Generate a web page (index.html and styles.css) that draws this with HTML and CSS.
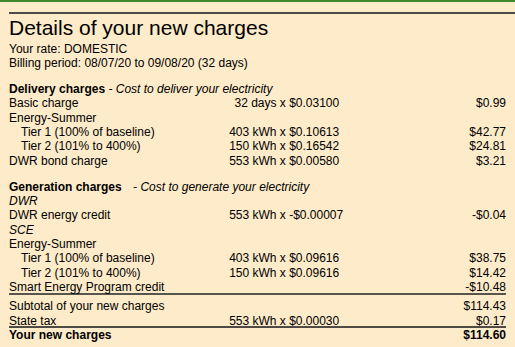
FILE: index.html
```html
<!DOCTYPE html>
<html lang="en">
<head>
<meta charset="utf-8">
<title>Details of your new charges</title>
<link rel="stylesheet" href="styles.css">
</head>
<body>
<div class="page">
  <div class="top-rule"></div>
  <h1 class="title">Details of your new charges</h1>
  <div class="info">
    <div class="line">Your rate: DOMESTIC</div>
    <div class="line">Billing period: 08/07/20 to 09/08/20 (32 days)</div>
  </div>

  <section class="section first">
    <div class="head"><b>Delivery charges</b> <i>- Cost to deliver your electricity</i></div>
    <div class="row"><span class="label">Basic charge</span><span class="qty">32 days</span><span class="rate">x $0.03100</span><span class="amt">$0.99</span></div>
    <div class="row"><span class="label">Energy-Summer</span></div>
    <div class="row"><span class="label indent">Tier 1 (100% of baseline)</span><span class="qty">403 kWh</span><span class="rate">x $0.10613</span><span class="amt">$42.77</span></div>
    <div class="row"><span class="label indent">Tier 2 (101% to 400%)</span><span class="qty">150 kWh</span><span class="rate">x $0.16542</span><span class="amt">$24.81</span></div>
    <div class="row"><span class="label">DWR bond charge</span><span class="qty">553 kWh</span><span class="rate">x $0.00580</span><span class="amt">$3.21</span></div>
  </section>

  <section class="section second">
    <div class="head"><b>Generation charges</b> <i class="wide">- Cost to generate your electricity</i></div>
    <div class="row"><span class="label"><i>DWR</i></span></div>
    <div class="row"><span class="label">DWR energy credit</span><span class="qty">553 kWh</span><span class="rate">x -$0.00007</span><span class="amt">-$0.04</span></div>
    <div class="row"><span class="label"><i>SCE</i></span></div>
    <div class="row"><span class="label">Energy-Summer</span></div>
    <div class="row"><span class="label indent">Tier 1 (100% of baseline)</span><span class="qty">403 kWh</span><span class="rate">x $0.09616</span><span class="amt">$38.75</span></div>
    <div class="row"><span class="label indent">Tier 2 (101% to 400%)</span><span class="qty">150 kWh</span><span class="rate">x $0.09616</span><span class="amt">$14.42</span></div>
    <div class="row before-rule"><span class="label">Smart Energy Program credit</span><span class="amt">-$10.48</span></div>
    <div class="row subtotal"><span class="label">Subtotal of your new charges</span><span class="amt">$114.43</span></div>
    <div class="row before-total"><span class="label">State tax</span><span class="qty">553 kWh</span><span class="rate">x $0.00030</span><span class="amt">$0.17</span></div>
    <div class="row total"><span class="label">Your new charges</span><span class="amt">$114.60</span></div>
  </section>
</div>
</body>
</html>
```

FILE: styles.css
```css
html, body {
  margin: 0;
  padding: 0;
  background: #fdebc9;
}

body {
  font-family: "Liberation Sans", Arial, sans-serif;
  font-size: 12px;
  color: #000;
  overflow: hidden;
}

.page {
  border-top: 2px solid #3f8a2c;
  padding: 0 9px 0 9px;
  min-height: 345px;
}

.top-rule {
  margin-top: 10px;
  margin-right: -9px;
  border-top: 2px solid #4f4b44;
}

.title {
  margin: 2px 0 0 0;
  font-size: 21px;
  font-weight: normal;
  line-height: 24px;
}

.info {
  margin-top: 2px;
}

.line,
.head,
.row {
  line-height: 14.3px;
  height: 14.3px;
}

.section.first {
  margin-top: 11.5px;
}

.section.second {
  margin-top: 12px;
}

.head {
  white-space: nowrap;
}

.head .wide {
  margin-left: 8px;
}

.row {
  display: grid;
  grid-template-columns: 211px 56.5px 110px 1fr;
  white-space: nowrap;
}

.label {
  grid-column: 1;
}

.label.indent {
  padding-left: 12px;
}

.qty {
  grid-column: 2;
  text-align: right;
}

.rate {
  grid-column: 3;
  padding-left: 3.3px;
}

.amt {
  grid-column: 4;
  text-align: right;
}

.row.before-rule {
  margin-bottom: -1px;
}

.row.subtotal {
  border-top: 2px solid #5a554c;
  padding-top: 4px;
}

.row.before-total {
  margin-bottom: -1.5px;
}

.row.total {
  border-top: 2px solid #4f4b44;
  font-weight: bold;
}
```
